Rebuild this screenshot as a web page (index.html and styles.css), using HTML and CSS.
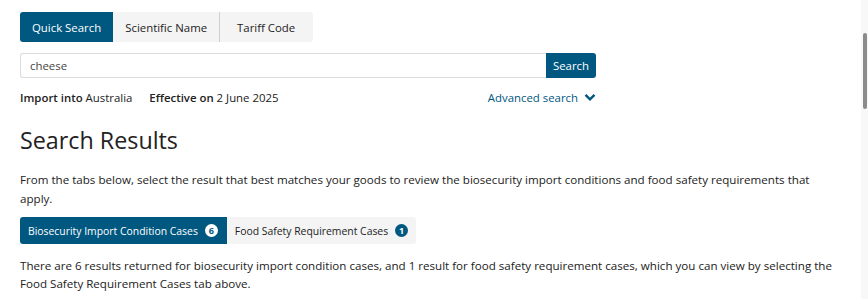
FILE: index.html
```html
<!DOCTYPE html>
<html lang="en">
<head>
<meta charset="utf-8">
<title>Search Results</title>
<link rel="stylesheet" href="styles.css">
</head>
<body>
<div class="page">
  <div class="search-tabs">
    <button class="stab active">Quick Search</button>
    <button class="stab">Scientific Name</button>
    <button class="stab last">Tariff Code</button>
  </div>
  <div class="search-row">
    <input class="search-input" type="text" value="cheese">
    <button class="search-btn">Search</button>
  </div>
  <div class="meta-row">
    <div class="meta">
      <span><b>Import into</b> Australia</span>
      <span><b>Effective on</b> 2 June 2025</span>
    </div>
    <a class="advanced" href="#">Advanced search
      <svg width="12" height="9" viewBox="0 0 12 9"><path d="M1.5 1.8 L6 6.3 L10.5 1.8" fill="none" stroke="#00577f" stroke-width="2.4"/></svg>
    </a>
  </div>
  <h1 class="title">Search Results</h1>
  <p class="text">From the tabs below, select the result that best matches your goods to review the biosecurity import conditions and food safety requirements that apply.</p>
  <div class="result-tabs">
    <button class="rtab active">Biosecurity Import Condition Cases <span class="badge">6</span></button>
    <button class="rtab">Food Safety Requirement Cases <span class="badge">1</span></button>
  </div>
  <p class="text text2">There are 6 results returned for biosecurity import condition cases, and 1 result for food safety requirement cases, which you can view by selecting the Food Safety Requirement Cases tab above.</p>
</div>
<div class="scrollbar"><div class="thumb"></div></div>
</body>
</html>
```
FILE: styles.css
```css
html, body { margin: 0; padding: 0; background: #fff; overflow: hidden; }
body { font-family: "Open Sans", "Noto Sans", sans-serif; color: #222; font-size: 11.6px; }
.page { width: 816px; padding: 12px 0 0 20px; }
.search-tabs { display: flex; height: 30px; }
.stab { font: inherit; font-size: 11.4px; border: 0; background: #f4f4f4; color: #222; padding: 0 12px; height: 30px; cursor: pointer; }
.stab.active { background: #00577f; color: #fff; border-radius: 3px 0 0 3px; }
.stab + .stab:not(.last) { border-right: 1px solid #cfcfcf; }
.stab.last { border-radius: 0 3px 3px 0; padding: 0 18px 0 17px; }
.search-row { display: flex; margin-top: 11px; width: 576px; height: 25px; }
.search-input { flex: 1; font: inherit; font-size: 11.4px; color: #444; border: 1px solid #dcdcdc; border-right: 0; border-radius: 3px 0 0 3px; padding: 0 9px; height: 25px; box-sizing: border-box; outline: none; }
.search-btn { font: inherit; font-size: 11.4px; border: 0; background: #00577f; color: #fff; width: 50px; height: 25px; border-radius: 0 3px 3px 0; padding: 0; }
.meta-row { display: flex; justify-content: space-between; align-items: center; width: 576px; margin-top: 9px; height: 20px; font-size: 11.4px; }
.meta { display: flex; gap: 17px; }
.meta b { font-weight: 600; }
.advanced { color: #00577f; text-decoration: none; display: flex; align-items: center; gap: 6px; }
.title { font-size: 23.3px; font-weight: 400; margin: 17px 0 0; line-height: 32px; color: #222; }
.text { margin: 14px 0 0; line-height: 19px; color: #222; }
.result-tabs { display: flex; margin-top: 9px; height: 27px; }
.rtab { font: inherit; font-size: 10.4px; border: 0; height: 27px; padding: 0 8px; background: #f4f4f4; color: #222; display: flex; align-items: center; gap: 7px; }
.rtab.active { background: #00577f; color: #fff; border-radius: 3px 0 0 3px; padding-right: 9px; }
.rtab:last-child { border-radius: 0 3px 3px 0; }
.badge { display: inline-flex; width: 13px; height: 13px; border-radius: 50%; background: #00577f; color: #fff; font-size: 9px; font-weight: 700; align-items: center; justify-content: center; }
.rtab.active .badge { background: #fff; color: #00577f; }
.text2 { margin-top: 13px; line-height: 18px; }
.scrollbar { position: fixed; top: 0; right: 0; width: 7px; height: 100%; background: #f8f8f8; }
.thumb { position: absolute; top: 33px; left: 2px; width: 4px; height: 76px; border-radius: 2px; background: #8c8c8c; }
```
